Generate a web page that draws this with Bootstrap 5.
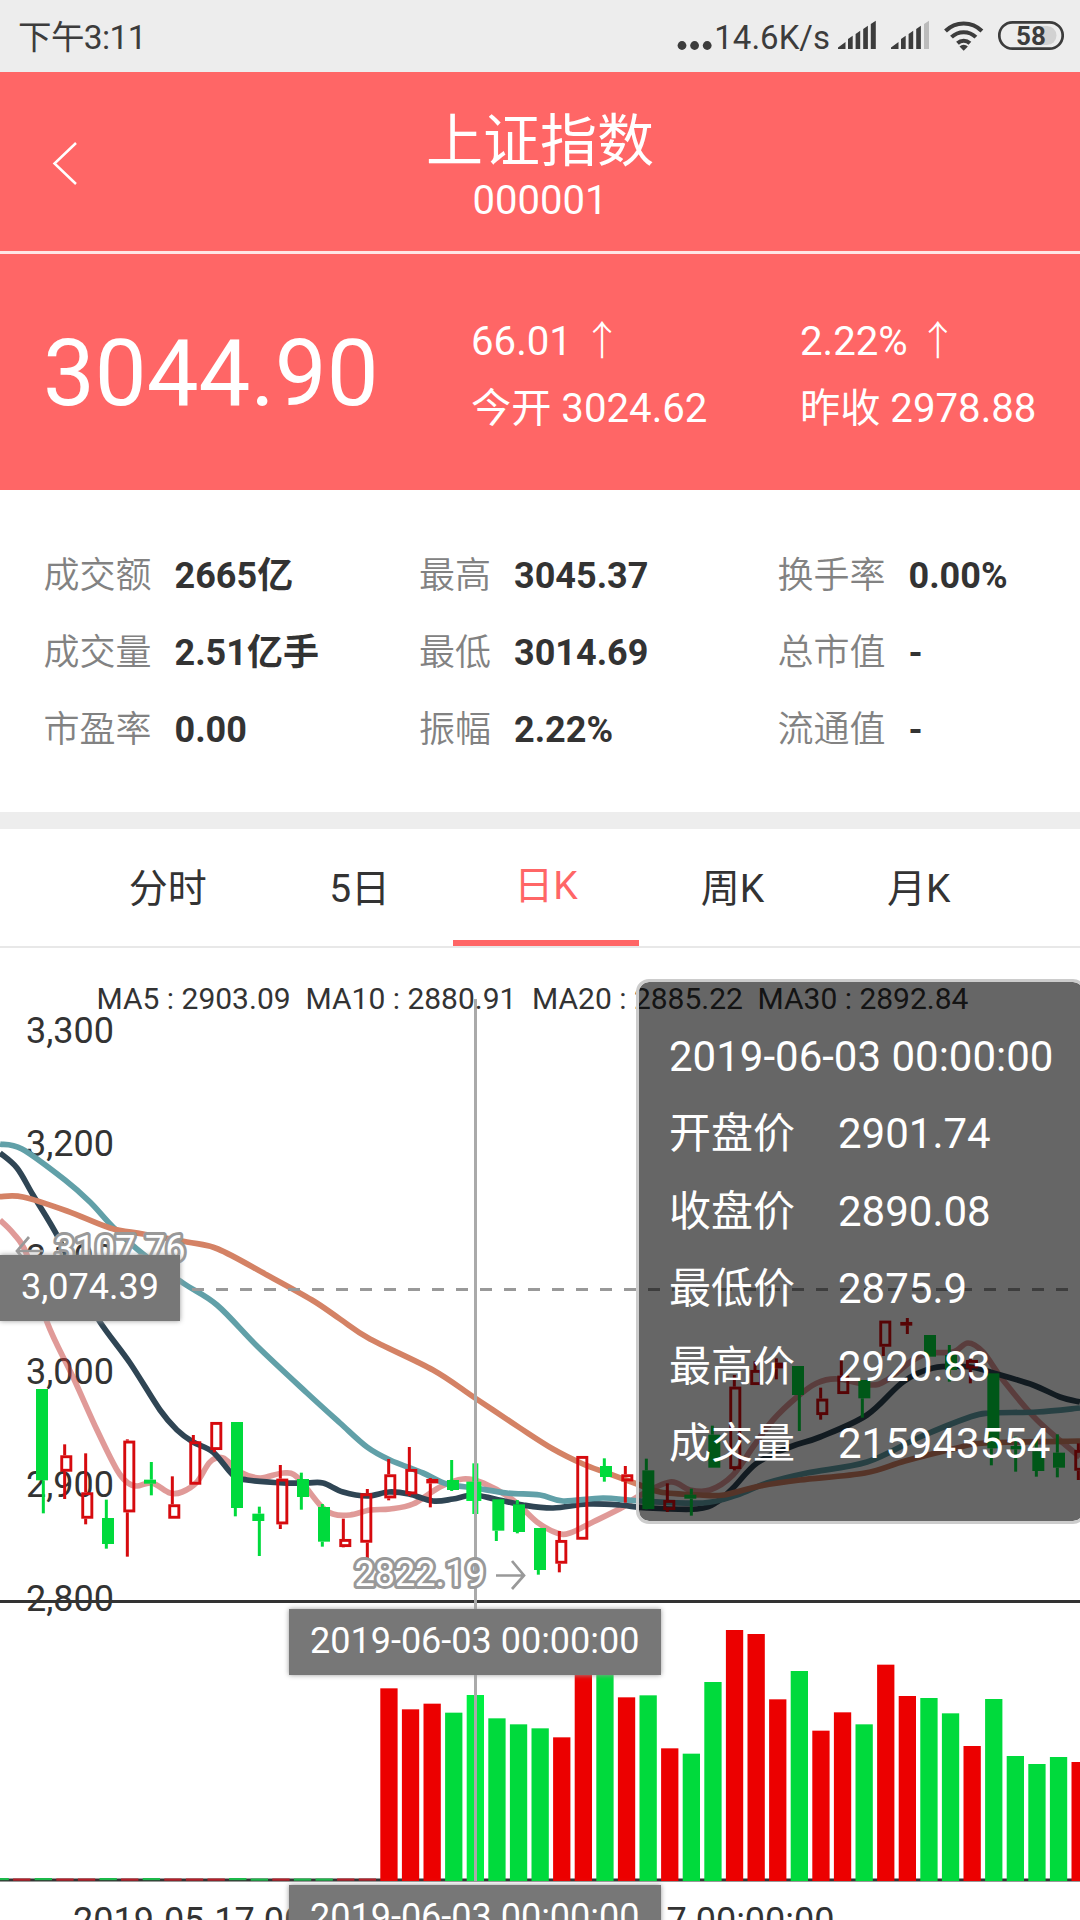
<!DOCTYPE html>
<html lang="zh-CN">
<head>
<meta charset="utf-8">
<meta name="viewport" content="width=device-width, initial-scale=1">
<title>上证指数 000001</title>
<link href="https://cdn.jsdelivr.net/npm/bootstrap@5.3.0/dist/css/bootstrap.min.css" rel="stylesheet">
<style>
body{font-family:Roboto,"Noto Sans CJK SC",sans-serif;color:#333;background:#fff;width:1080px;height:1920px;overflow:hidden}
.status-strip{height:72px;background:#ededed;color:#3c3c3c;font-size:33px;line-height:72px;padding:0 16px 0 18px}
.status-strip .clock-text{font-size:33.5px;letter-spacing:-.6px;padding-top:4px}
.status-strip .speed-text{padding-top:3px}
.coral{background:#ff6666;color:#fff}
.title-bar{height:182px;border-bottom:3px solid #ffe5e5;padding-top:36px}
.title-name{font-size:57px;line-height:68px}
.title-code{font-size:40px;line-height:50px}
.back-link{position:absolute;left:50px;top:68px}
.quote-panel{height:236px;line-height:1}
.quote-price{font-size:92.3px;width:471px;padding-left:43px;padding-top:74px}
.quote-cell{font-size:40.2px;padding-top:55px}
.quote-cell div{height:66.6px;line-height:66.6px;white-space:pre}
.quote-cell i{font-style:normal;font-weight:200}
.quote-a{width:329px}
.stats{height:322px;padding:47.5px 0 0 43.5px;font-size:36px}
.stats .stat-line{height:77px;line-height:77px;gap:23px}
.stats span{color:#828282;font-weight:350}
.stats span,.stats b{letter-spacing:0}
.stat-a{width:375.5px}.stat-b{width:358.5px}
.divider-band{height:17px;background:#ededed}
.tab-strip{height:119px;border-bottom:2px solid #e8e8e8;padding-left:80px}
.tab-strip .nav-link{width:186.4px;height:117px;padding:0;border-radius:0;color:#333;font-size:39px;line-height:120px;text-align:center}
.tab-strip .nav-link.first-tab{text-indent:-11px}
.tab-strip .nav-link.active{color:#ff6666;background:none;border-bottom:6px solid #ff6666;line-height:115px}
.chart-area{height:972px}
.chart-area svg{display:block}
.chart-area text{font-size:36px;fill:#333}
.chart-area .legend-text{font-size:30px}
.chart-area .mark-text{fill:#fff;stroke:#999;stroke-width:6px;paint-order:stroke;stroke-linejoin:round}
.axis-tag{position:absolute;background:#777;color:#fff;font-size:36px;line-height:65px;height:66px;padding:0 21px;box-shadow:0 0 5px #999;white-space:nowrap}
.tag-y{left:0;top:307px}.tag-x1{left:289px;top:661px}.tag-x2{left:289px;top:937px}
.info-pop{position:absolute;left:636px;top:31px;width:450px;height:545px;border:3px solid #ccc;border-radius:13px;background:rgba(0,0,0,.6);background-clip:padding-box;color:#fff;font-size:42px;padding:36px 0 0 30px;white-space:nowrap}
.info-pop div{height:77.4px;line-height:77.4px;gap:43px}
</style>
<script src="https://cdn.jsdelivr.net/npm/bootstrap@5.3.0/dist/js/bootstrap.bundle.min.js"></script>
</head>
<body>
<div class="status-strip d-flex justify-content-between align-items-center">
  <span class="clock-text">下午3:11</span>
  <div class="d-flex align-items-center">
    <svg width="38" height="72" viewBox="676 0 38 72" fill="#3c3c3c"><circle cx="682" cy="45.5" r="4.4"/><circle cx="694.6" cy="45.5" r="4.4"/><circle cx="707.2" cy="45.5" r="4.4"/></svg>
    <span class="speed-text">14.6K/s</span>
    <svg width="234" height="72" viewBox="830 0 234 72" fill="#3c3c3c">
      <path d="M838 49v-1.5l7.5-5.5V49zM848 49V39l4.7-3.2V49zM855.6 49V34l4.6-3.2V49zM863.2 49V29l4.7-3.3V49zM870.8 49V24l5-3.3V49z"/>
      <path d="M891 49v-1.5l7.5-5.5V49zM901 49V39l4.7-3.2V49zM908.6 49V34l4.6-3.2V49zM916.2 49V29l4.7-3.3V49z"/>
      <path fill="#bbb" d="M924 49V24l5-3.3V49z"/>
      <g fill="none" stroke="#3c3c3c" stroke-width="4"><path d="M945.5 31a25.7 25.7 0 0 1 36.400 0M951.500 37.200a17.300 17.300 0 0 1 24.400 0M957.500 43.200a9 9 0 0 1 12.400 0"/></g><path d="M959.500 46.500a6 6 0 0 1 8.400 0l-4.200 4.200z"/>
      <path d="M1041 26h6a9.500 9.500 0 0 1 0 19h-6z" fill="#d2d2d2"/>
      <rect x="999.300" y="22.300" width="63.400" height="26.400" rx="13.200" fill="none" stroke="#3c3c3c" stroke-width="2.700"/>
      <text x="1031" y="45" font-size="26" font-weight="700" text-anchor="middle">58</text>
    </svg>
  </div>
</div>
<header class="coral title-bar position-relative text-center">
  <a class="back-link" href="#" aria-label="返回"><svg class="d-block" width="30" height="48" fill="none" stroke="#fff" stroke-width="2.500"><path d="M26 3L4.500 23.500L26 44"/></svg></a>
  <div class="title-name">上证指数</div>
  <div class="title-code">000001</div>
</header>
<section class="coral quote-panel d-flex">
  <div class="quote-price">3044.90</div>
  <div class="quote-cell quote-a"><div>66.01 <i>↑</i></div><div>今开 3024.62</div></div>
  <div class="quote-cell"><div>2.22% <i>↑</i></div><div>昨收 2978.88</div></div>
</section>
<section class="stats d-flex">
  <div class="stat-a"><div class="stat-line d-flex"><span>成交额</span><b>2665亿</b></div><div class="stat-line d-flex"><span>成交量</span><b>2.51亿手</b></div><div class="stat-line d-flex"><span>市盈率</span><b>0.00</b></div></div>
  <div class="stat-b"><div class="stat-line d-flex"><span>最高</span><b>3045.37</b></div><div class="stat-line d-flex"><span>最低</span><b>3014.69</b></div><div class="stat-line d-flex"><span>振幅</span><b>2.22%</b></div></div>
  <div><div class="stat-line d-flex"><span>换手率</span><b>0.00%</b></div><div class="stat-line d-flex"><span>总市值</span><b>-</b></div><div class="stat-line d-flex"><span>流通值</span><b>-</b></div></div>
</section>
<div class="divider-band"></div>
<nav class="nav tab-strip flex-nowrap">
  <a class="nav-link first-tab" href="#">分时</a><a class="nav-link" href="#">5日</a><a class="nav-link active" href="#">日K</a><a class="nav-link" href="#">周K</a><a class="nav-link" href="#">月K</a>
</nav>
<main class="chart-area position-relative overflow-hidden">
  <svg width="1080" height="972" viewBox="0 948 1080 972">
    <g><text x="26" y="1042.700">3,300</text><text x="26" y="1155.500">3,200</text><text x="26" y="1269.500">3,100</text><text x="26" y="1383.500">3,000</text><text x="26" y="1496.700">2,900</text><text x="26" y="1610.500">2,800</text></g>
    <g><text x="73" y="1933">2019-05-17 00:00:00</text><text x="505" y="1933">2019-06-17 00:00:00</text></g>
    <path d="M0 1601.500H1080M0 1880H1080" stroke="#333" stroke-width="3"/>
    <g id="volumes"></g>
    <g id="averages" fill="none" stroke-width="5.700" stroke-linejoin="round"></g>
    <g id="candles"></g>
    <path d="M0 1289.400H1080" stroke="#999" stroke-width="3" stroke-dasharray="12 12"/>
    <path d="M475.500 999V1881" stroke="#aaa" stroke-width="3"/>
    <g><text class="legend-text" x="96.500" y="1009">MA5 : 2903.09</text><text class="legend-text" x="305.500" y="1009">MA10 : 2880.91</text><text class="legend-text" x="532" y="1009">MA20 : 2885.22</text><text class="legend-text" x="757.500" y="1009">MA30 : 2892.84</text></g>
    <text class="mark-text" x="54.500" y="1261">3107.76</text>
    <text class="mark-text" x="354.500" y="1586">2822.19</text>
    <path d="M43 1251H17M29 1237L17 1251L29 1265M496 1575.500H523M512 1561L524 1575.500L512 1589" fill="none" stroke="#999" stroke-width="2.700"/>
  </svg>
  <div class="axis-tag tag-y">3,074.39</div>
  <div class="axis-tag tag-x1">2019-06-03 00:00:00</div>
  <div class="axis-tag tag-x2">2019-06-03 00:00:00</div>
  <div class="info-pop">
    <div>2019-06-03 00:00:00</div>
    <div class="d-flex"><span>开盘价</span><span>2901.74</span></div>
    <div class="d-flex"><span>收盘价</span><span>2890.08</span></div>
    <div class="d-flex"><span>最低价</span><span>2875.9</span></div>
    <div class="d-flex"><span>最高价</span><span>2920.83</span></div>
    <div class="d-flex"><span>成交量</span><span>215943554</span></div>
  </div>
</main>
<script>
const NS='http://www.w3.org/2000/svg';
function add(id,tag,attrs){const e=document.createElementNS(NS,tag);for(const k in attrs)e.setAttribute(k,attrs[k]);document.getElementById(id).appendChild(e)}
const GREEN='#00da3c',RED='#ec0000';
// Volume bars: colour and top, in thirds of a pixel below y=1590
const vol='R295 R358 R341 G368 G315 G385 G403 G415 R442 R240 G240 R322 G316 R475 G491 G276 R120 R132 R328 G243 R422 R367 G403 R224 R318 G324 G370 R468 G327 G498 G522 G501 R516'.split(' ');
vol.forEach((v,i)=>{const y=1590+v.slice(1)/3;add('volumes','rect',{x:380.3+i*21.6,y,width:17.3,height:1881-y,fill:i===4?'#00ef42':v[0]==='R'?RED:GREEN})});
'GRGRRGRGRRRGGRGGRR'.split('').forEach((c,i)=>add('volumes','rect',{x:-8.500+i*21.6,y:c==='G'&&i<12?1878:1878.5,width:17.3,height:2.2,fill:c==='R'?'#b5202a':'#1cb84a'}));
// Candles: origin, then colour, wick x, wick top, wick bottom, body left, body top, body bottom
const sets=[[0,1290,`G 130 297 670 108 297 571
R 194 463 627 181 496 545
R 257 490 703 244 607 686
G 319 629 776 306 684 762
R 382 448 800 370 452 667
G 454 516 616 432 569 581
R 517 559 686 505 643 686
R 580 435 584 568 454 584
R 643 396 487 631 396 480
G 706 396 679 693 396 654
G 778 650 798 757 671 693
R 841 525 717 829 566 703
G 904 548 659 891 567 621
G 967 642 770 954 651 755
R 1030 686 772 1018 747 771`],[340,1240,`R 82 747 955 61 760 908
R 146 657 781 133 703 775
R 208 621 768 196 687 763
R 271 714 802 259 717 730
G 335 660 753 321 720 750
H 406 670 822 379 725 783
G 469 778 903 457 778 872
G 532 780 880 519 793 876
G 595 864 1004 582 864 990
R 658 873 997 646 900 971
R 724 648 899 709 648 899
G 793 655 725 780 678 711
R 856 678 788 844 703 724`],[620,1290,`G 79 506 658 67 541 657
R 142 580 666 130 630 660
G 214 596 677 193 614 626
G 277 407 533 265 434 533
R 343 255 541 328 290 537
R 405 214 285 391 240 285
R 469 205 268 454 218 235
G 538 228 423 516 228 315
R 602 293 389 589 326 375
R 664 210 312 652 257 312
G 727 270 383 715 270 325
R 790 92 198 778 92 170
R 862 84 132 841 96 106
G 930 135 200 912 135 200
G 988 165 275 975 195 240
R 1051 205 280 1038 210 235
G 1114 250 526 1102 250 475
G 1187 440 545 1172 468 478
G 1249 440 560 1237 484 543
G 1312 433 562 1299 488 533
R 1375 460 570 1363 480 542`]];
for(const [ox,oy,rows] of sets)for(const r of rows.split('\n')){
 const [c,wx,a,b,l,t,m]=r.split(' ').map((v,i)=>i?v/3:v);
 const hot=c==='H',red=c==='R',col=red?'#d60a0e':hot?'#00ef42':GREEN,w=hot?15:12;
 const wick=(y1,y2)=>{if(y2-y1>.3)add('candles','rect',{x:ox+wx-(hot?3:1.5),y:oy+y1,width:hot?6:3,height:y2-y1,fill:col})};
 wick(a,t);wick(m,b);
 if(red)add('candles','rect',{x:ox+l+1.4,y:oy+t+1.4,width:w-2.9,height:Math.max(m-t-2.8,.8),fill:'none',stroke:col,'stroke-width':2.9});
 else add('candles','rect',{x:ox+l,y:oy+t,width:w,height:m-t,fill:col});
}
// Moving averages, drawn as smooth curves through the points
const lines=[
['#c23531',.5,'0,1220 13,1233 27,1255 47,1322 73,1377 97,1430 117,1470 128,1483 137,1486 152,1483 170,1493 182,1492 197,1482 210,1462 223,1458 240,1472 260,1478 283,1473 297,1477 320,1505 333,1514 350,1515 370,1510 390,1509 413,1504 440,1487 463,1479 483,1483 513,1500 537,1522 557,1533 570,1533 593,1522 623,1507 637,1497 670,1482 690,1490 710,1490 733,1475 753,1447 773,1420 797,1397 817,1383 837,1379 870,1385 887,1380 913,1360 930,1353 953,1352 968,1343 983,1352 1003,1380 1037,1420 1080,1457'],
['#2f4554',1,'0,1153 17,1168 33,1195 58,1237 80,1285 100,1322 130,1363 160,1410 177,1430 193,1442 213,1452 233,1475 247,1480 283,1483 307,1483 323,1483 343,1492 367,1496 389,1492 409,1494 433,1501 453,1499 473,1495 495,1499 523,1505 553,1508 587,1504 620,1505 647,1508 697,1509 717,1502 733,1488 757,1463 790,1447 820,1437 867,1415 903,1382 933,1368 970,1367 997,1374 1033,1385 1060,1397 1080,1402'],
['#61a0a8',1,'0,1144 22,1149 65,1180 90,1202 113,1227 143,1254 183,1283 217,1305 258,1347 307,1393 340,1423 367,1447 390,1460 423,1473 447,1484 475,1488 507,1493 540,1495 563,1501 603,1498 640,1501 703,1503 737,1495 767,1483 807,1473 867,1462 920,1437 970,1417 990,1413 1037,1412 1080,1408'],
['#d48265',1,'0,1196.700 23,1197 67,1211 110,1228 143,1234 187,1242 218,1249 267,1275 312,1300 340,1319 370,1339 433,1370 475,1398 520,1428 553,1449 583,1464 607,1473 637,1484 660,1492 700,1495 724,1495 760,1486 800,1480 865,1473 905,1461 957,1448 985,1443 1080,1441']];
for(const [stroke,op,s] of lines){
 const p=s.split(' ').map(q=>q.split(',').map(Number));let d='M'+p[0];
 for(let i=0;i<p.length-1;i++){const a=p[i-1]||p[i],b=p[i],c=p[i+1],e=p[i+2]||c;
  d+=`C${b[0]+(c[0]-a[0])/6},${b[1]+(c[1]-a[1])/6} ${c[0]-(e[0]-b[0])/6},${c[1]-(e[1]-b[1])/6} ${c}`}
 add('averages','path',{d,stroke,'stroke-opacity':op});
}
</script>
</body>
</html>
